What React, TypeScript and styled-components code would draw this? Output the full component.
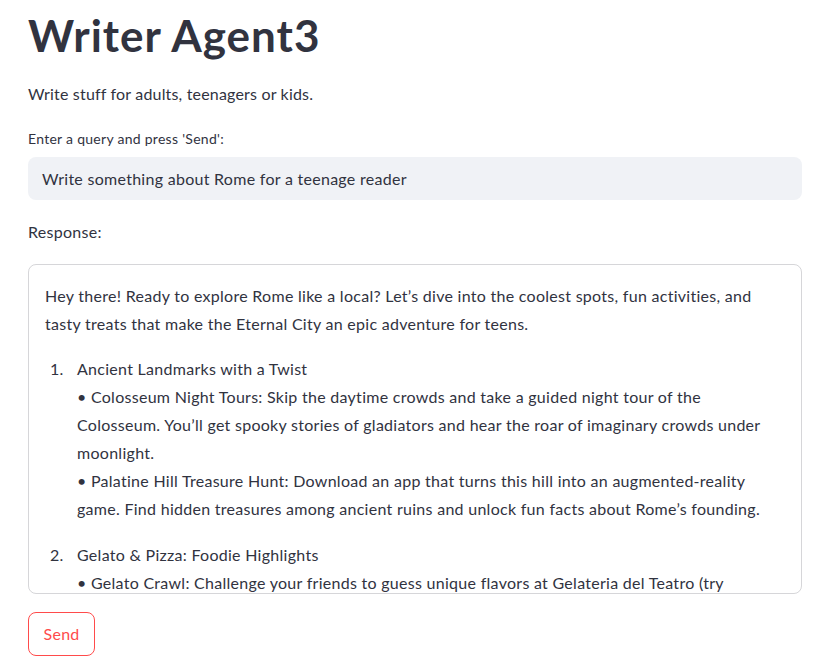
import styled, { createGlobalStyle } from 'styled-components';

const GlobalStyle = createGlobalStyle`
  html, body {
    margin: 0;
    padding: 0;
    background: #ffffff;
  }
  body {
    font-family: Lato, "Open Sans", sans-serif;
    color: #31333f;
    letter-spacing: 0.28px;
    -webkit-font-smoothing: antialiased;
  }
`;

const Page = styled.main`
  width: 774px;
  padding: 9px 0 0 28px;
`;

const Title = styled.h1`
  margin: 0;
  font-size: 44px;
  font-weight: 700;
  line-height: 1.2;
  letter-spacing: 1px;
  color: #31333f;
`;

const Caption = styled.p`
  margin: 18px 0 0;
  font-size: 16px;
  line-height: 28px;
  letter-spacing: 0.18px;
`;

const Label = styled.label`
  display: block;
  margin-top: 21px;
  font-size: 14px;
  line-height: 20px;
`;

const QueryInput = styled.div`
  margin-top: 8px;
  height: 43px;
  box-sizing: border-box;
  display: flex;
  align-items: center;
  padding: 0 14px;
  background: #f0f2f6;
  border-radius: 8px;
  font-size: 16px;
`;

const SectionLabel = styled.p`
  margin: 18px 0 0;
  font-size: 16px;
  line-height: 28px;
`;

const ResponseBox = styled.div`
  margin-top: 18px;
  height: 330px;
  box-sizing: border-box;
  border: 1px solid rgba(49, 51, 63, 0.2);
  border-radius: 8px;
  padding: 17px 16px 0 16px;
  overflow: hidden;
  font-size: 16px;
  line-height: 28px;
`;

const Para = styled.p`
  margin: 0 0 17px;
`;

const Steps = styled.ol`
  margin: 0;
  padding: 0;
  list-style: none;
`;

const Step = styled.li`
  display: grid;
  grid-template-columns: 32px 1fr;
  margin-bottom: 18px;
`;

const StepNum = styled.span`
  padding-left: 5px;
`;

const Line = styled.span`
  display: block;
`;

const SendButton = styled.button`
  margin-top: 18px;
  height: 44px;
  padding: 0 14.5px;
  background: #ffffff;
  border: 1px solid #ff4b4b;
  border-radius: 8px;
  color: #ff4b4b;
  font-family: inherit;
  font-size: 16px;
  letter-spacing: 0.28px;
  cursor: pointer;
`;

const items = [
  {
    head: 'Ancient Landmarks with a Twist',
    lines: [
      '• Colosseum Night Tours: Skip the daytime crowds and take a guided night tour of the Colosseum. You’ll get spooky stories of gladiators and hear the roar of imaginary crowds under moonlight.',
      '• Palatine Hill Treasure Hunt: Download an app that turns this hill into an augmented-reality game. Find hidden treasures among ancient ruins and unlock fun facts about Rome’s founding.',
    ],
  },
  {
    head: 'Gelato & Pizza: Foodie Highlights',
    lines: [
      '• Gelato Crawl: Challenge your friends to guess unique flavors at Gelateria del Teatro (try pistachio or ricotta and fig) and vote for the best scoop.',
    ],
  },
];

export default function App() {
  return (
    <>
      <GlobalStyle />
      <Page>
        <Title>Writer Agent3</Title>
        <Caption>Write stuff for adults, teenagers or kids.</Caption>
        <Label>Enter a query and press 'Send':</Label>
        <QueryInput>Write something about Rome for a teenage reader</QueryInput>
        <SectionLabel>Response:</SectionLabel>
        <ResponseBox>
          <Para>
            Hey there! Ready to explore Rome like a local? Let’s dive into the coolest spots, fun
            activities, and tasty treats that make the Eternal City an epic adventure for teens.
          </Para>
          <Steps>
            {items.map((item, i) => (
              <Step key={item.head}>
                <StepNum>{i + 1}.</StepNum>
                <div>
                  <Line>{item.head}</Line>
                  {item.lines.map((l) => (
                    <Line key={l}>{l}</Line>
                  ))}
                </div>
              </Step>
            ))}
          </Steps>
        </ResponseBox>
        <SendButton>Send</SendButton>
      </Page>
    </>
  );
}
